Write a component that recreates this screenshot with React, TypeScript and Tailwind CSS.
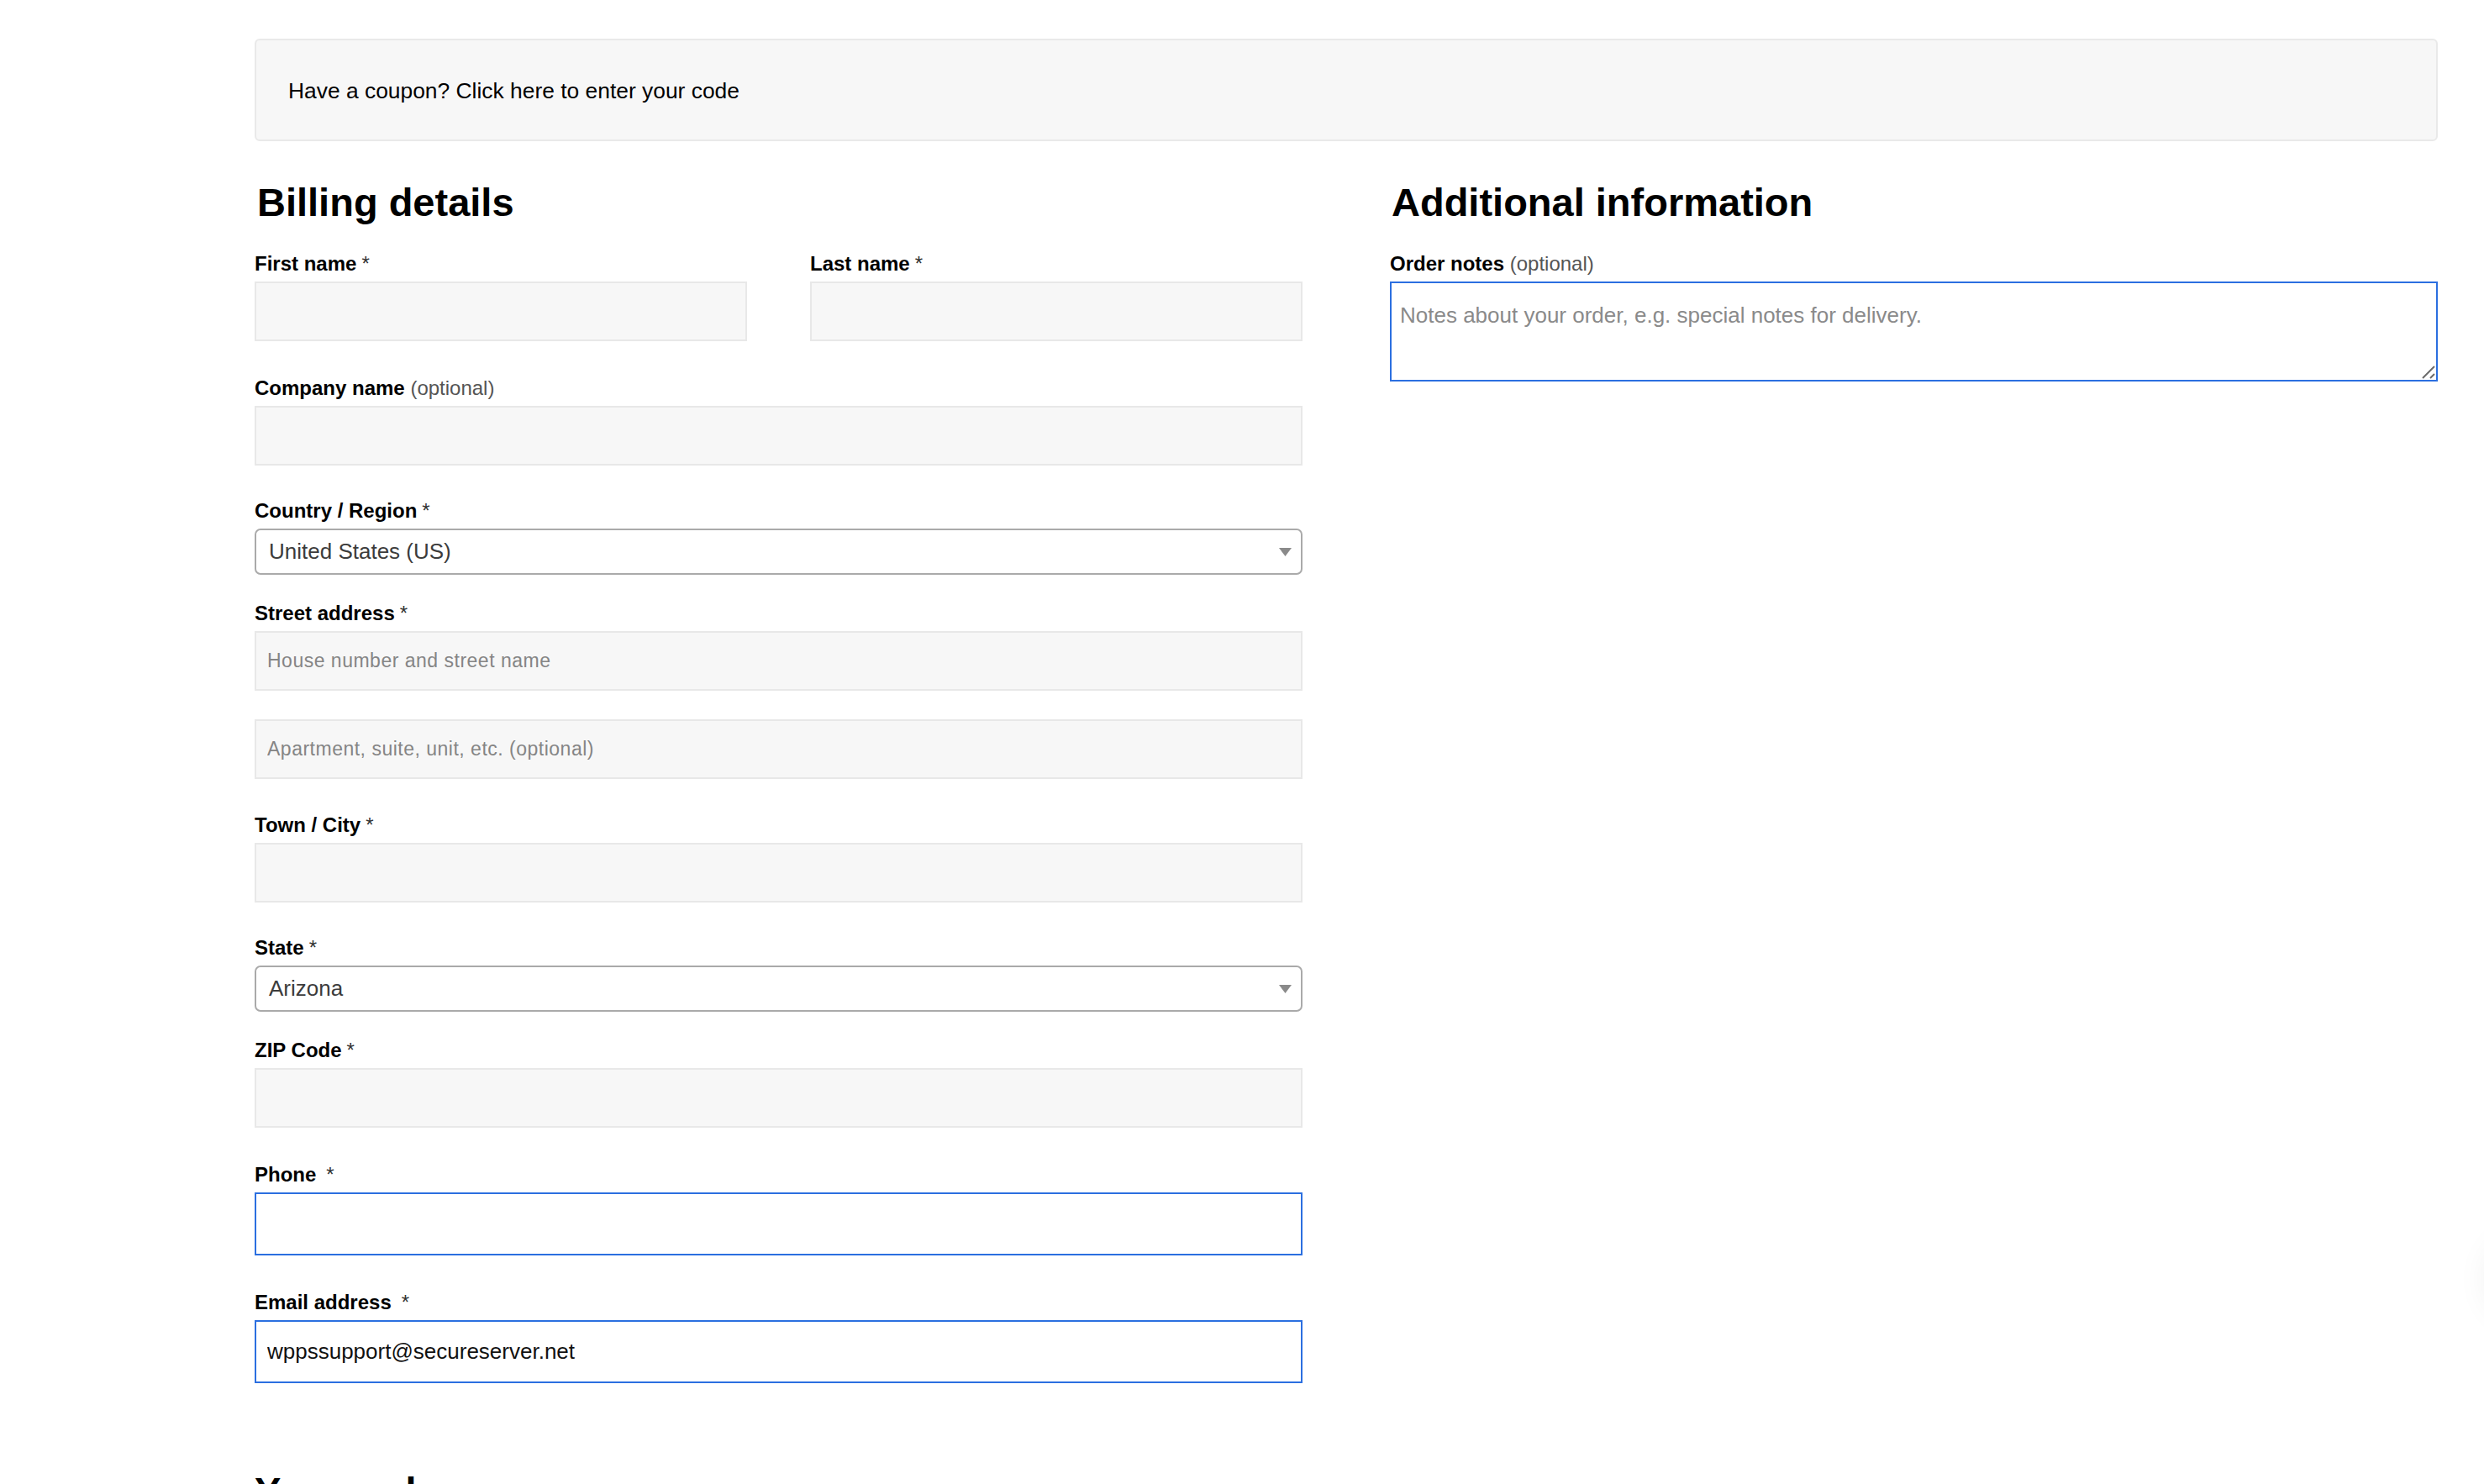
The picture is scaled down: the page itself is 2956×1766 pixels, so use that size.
import React from "react";

const inputBase =
  "block w-full h-[71px] border-2 border-[#e8e8e8] bg-[#f7f7f7] pl-[13px] text-[23px] tracking-[0.5px] text-[#111] outline-none placeholder:text-[#858585]";

const focusBase =
  "block w-full h-[75px] border-2 border-[#2b6fe0] bg-white pl-[13px] text-[26px] text-[#111] outline-none";

const Label = ({
  text,
  optional,
  required,
  wide,
}: {
  text: string;
  optional?: boolean;
  required?: boolean;
  wide?: boolean;
}) => (
  <label className="block h-[41px] text-[24px] leading-[39px] font-bold text-black whitespace-nowrap">
    {text}
    {optional && <span className="font-normal text-[#555]"> (optional)</span>}
    {required && (
      <span className={`font-normal text-[#333] ${wide ? "ml-[12px]" : "ml-[6px]"}`}>*</span>
    )}
  </label>
);

const SelectBox = ({ value }: { value: string }) => (
  <div className="flex h-[55px] w-full items-center justify-between rounded-[7px] border-2 border-[#aaaaaa] bg-white pl-[15px] pr-[11px]">
    <span className="text-[26px] text-[#3c3c3c]">{value}</span>
    <svg width="15" height="10" viewBox="0 0 15 10">
      <path d="M0 0H15L7.5 10Z" fill="#8a8a8a" />
    </svg>
  </div>
);

const App = () => {
  return (
    <div className="relative min-h-screen overflow-hidden bg-white font-['Liberation_Sans',Arial,sans-serif] text-black">
      <div className="ml-[303px] w-[2598px] pt-[46px] pb-[200px]">
        <div className="flex h-[122px] items-center rounded-[6px] border-2 border-[#e9e9e9] bg-[#f7f7f7] pl-[38px] pt-[3px] text-[26.4px] leading-[39px]">
          Have a coupon? Click here to enter your code
        </div>

        <div className="mt-[44px] grid grid-cols-2 gap-x-[104px]">
          {/* billing */}
          <div className="flex flex-col">
            <h3 className="ml-[3px] mb-[24px] h-[58px] text-[47px] font-bold leading-[58px]">Billing details</h3>

            <div className="mb-[36px] grid grid-cols-2 gap-x-[75px]">
              <div>
                <Label text="First name" required />
                <input className={inputBase} readOnly />
              </div>
              <div>
                <Label text="Last name" required />
                <input className={inputBase} readOnly />
              </div>
            </div>

            <div className="mb-[34px]">
              <Label text="Company name" optional />
              <input className={inputBase} readOnly />
            </div>

            <div className="mb-[26px]">
              <Label text="Country / Region" required />
              <SelectBox value="United States (US)" />
            </div>

            <div className="mb-[35px]">
              <Label text="Street address" required />
              <input className={inputBase} placeholder="House number and street name" readOnly />
              <input
                className={`${inputBase} mt-[34px]`}
                placeholder="Apartment, suite, unit, etc. (optional)"
                readOnly
              />
            </div>

            <div className="mb-[34px]">
              <Label text="Town / City" required />
              <input className={inputBase} readOnly />
            </div>

            <div className="mb-[26px]">
              <Label text="State" required />
              <SelectBox value="Arizona" />
            </div>

            <div className="mb-[36px]">
              <Label text="ZIP Code" required />
              <input className={inputBase} readOnly />
            </div>

            <div className="mb-[36px]">
              <Label text="Phone" required wide />
              <input className={focusBase} readOnly />
            </div>

            <div className="mb-[100px]">
              <Label text="Email address" required wide />
              <input className={focusBase} defaultValue="wppssupport@secureserver.net" readOnly />
            </div>

            <h3 className="h-[58px] text-[47px] font-bold leading-[58px]">Your order</h3>
          </div>

          {/* additional */}
          <div className="flex flex-col">
            <h3 className="ml-[2px] mb-[24px] h-[58px] text-[47px] font-bold leading-[58px]">
              Additional information
            </h3>
            <Label text="Order notes" optional />
            <div className="relative h-[119px] w-full border-2 border-[#2b6fe0] bg-white">
              <textarea
                className="h-full w-full resize-none pl-[10px] pt-[19px] text-[26px] leading-[39px] outline-none placeholder:text-[#8a8a8a]"
                placeholder="Notes about your order, e.g. special notes for delivery."
                readOnly
              />
              <svg className="absolute bottom-[1px] right-[1px]" width="17" height="17" viewBox="0 0 17 17">
                <path d="M2 16L16 2M11 16L16 11" stroke="#6b6b6b" strokeWidth="2" />
              </svg>
            </div>
          </div>
        </div>
      </div>

      <div className="absolute right-[-104px] top-[1472px] h-[100px] w-[100px] rounded-full bg-white shadow-[0_0_40px_rgba(0,0,0,0.07)]" />
    </div>
  );
};

export default App;
